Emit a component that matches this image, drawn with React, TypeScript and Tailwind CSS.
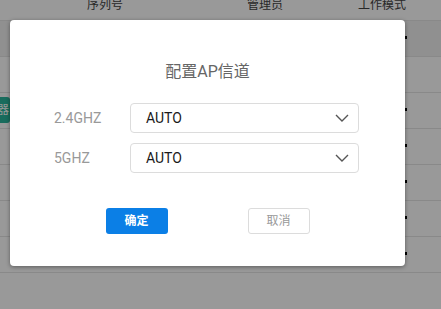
const rows = [0, 1, 2, 3, 4, 5, 6];

function Chevron() {
  return (
    <svg width="14" height="8" viewBox="0 0 14 8" fill="none">
      <polyline points="1,1 7,7 13,1" stroke="#555" strokeWidth="1.4" />
    </svg>
  );
}

function ChannelRow({ label }: { label: string }) {
  return (
    <div className="flex items-center">
      <div className="w-[120px] pl-[44px] text-[14px] text-[#999] whitespace-nowrap">{label}</div>
      <div className="flex h-[30px] w-[229px] items-center justify-between rounded-[4px] border border-[#dcdcdc] pl-[15px] pr-[9px]">
        <span className="text-[14px] text-[#1a1a1a]">AUTO</span>
        <Chevron />
      </div>
    </div>
  );
}

export default function App() {
  return (
    <div
      className="relative h-[309px] w-[441px] overflow-hidden bg-white"
      style={{ fontFamily: '"Roboto", "Noto Sans CJK SC", sans-serif' }}
    >
      {/* table behind */}
      <div className="relative h-[21px] border-b border-[#e5e5e5] text-[12px] text-[#444]">
        <span className="absolute left-[87px] top-[-4px] leading-[18px]">序列号</span>
        <span className="absolute left-[247px] top-[-4px] leading-[18px]">管理员</span>
        <span className="absolute left-[358px] top-[-4px] leading-[18px]">工作模式</span>
      </div>
      {rows.map((r) => (
        <div
          key={r}
          className={`relative flex h-[36px] items-center border-b border-[#e5e5e5] ${r === 0 ? "bg-[#f0f0f0]" : ""}`}
        >
          {r === 2 && (
            <div className="absolute left-[-8px] top-[4px] flex h-[26px] w-[18px] items-center justify-end rounded-[3px] bg-[#2bb59c] pr-[1px] text-[12px] text-white">
              器
            </div>
          )}
          {r !== 1 && <span className="absolute left-[405px] top-[15px] h-[3px] w-[1.5px] bg-black" />}
        </div>
      ))}

      {/* overlay */}
      <div className="absolute inset-0 bg-black/40" />

      {/* dialog */}
      <div className="absolute left-[10px] top-[20px] h-[246px] w-[395px] rounded-[4px] bg-white shadow-[0_1px_4px_rgba(0,0,0,0.4)]">
        <div className="pt-[40px] text-center text-[16px] leading-[24px] text-[#666]">配置AP信道</div>
        <div className="mt-[19px] flex flex-col gap-[10px]">
          <ChannelRow label="2.4GHZ" />
          <ChannelRow label="5GHZ" />
        </div>
        <div className="mt-[35px] flex justify-center gap-[80px]">
          <button className="h-[26px] w-[62px] rounded-[3px] bg-[#0b7fe6] text-[12px] font-bold text-white">
            确定
          </button>
          <button className="h-[26px] w-[62px] rounded-[3px] border border-[#dcdcdc] bg-white text-[12px] text-[#999]">
            取消
          </button>
        </div>
      </div>
    </div>
  );
}
